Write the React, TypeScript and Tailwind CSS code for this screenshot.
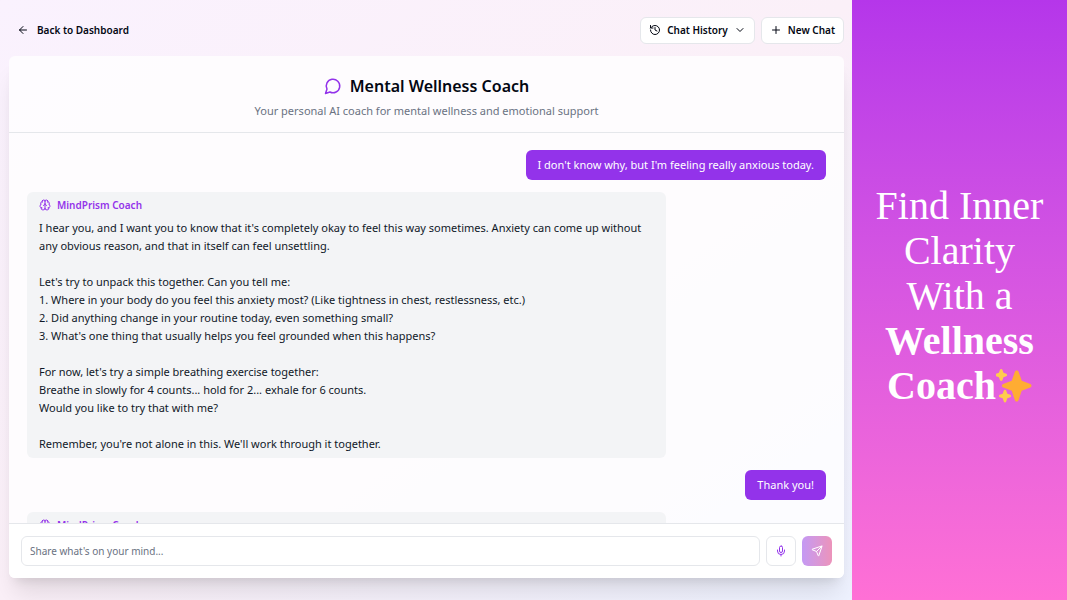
import React, { useState } from 'react';
import { ArrowLeft, Brain, ChevronDown, History, Mic, Plus } from 'lucide-react';

interface Message {
  id: number;
  role: 'user' | 'coach';
  text: string;
}

const initialMessages: Message[] = [
  { id: 1, role: 'user', text: "I don't know why, but I'm feeling really anxious today." },
  {
    id: 2,
    role: 'coach',
    text: `I hear you, and I want you to know that it's completely okay to feel this way sometimes. Anxiety can come up without any obvious reason, and that in itself can feel unsettling.

Let's try to unpack this together. Can you tell me:
1. Where in your body do you feel this anxiety most? (Like tightness in chest, restlessness, etc.)
2. Did anything change in your routine today, even something small?
3. What's one thing that usually helps you feel grounded when this happens?

For now, let's try a simple breathing exercise together:
Breathe in slowly for 4 counts... hold for 2... exhale for 6 counts.
Would you like to try that with me?

Remember, you're not alone in this. We'll work through it together.`,
  },
  { id: 3, role: 'user', text: 'Thank you!' },
  { id: 4, role: 'coach', text: '' },
];

const ChatBubbleIcon: React.FC = () => (
  <svg className="size-[18px] text-[#9333ea]" viewBox="0 0 24 24" fill="none" stroke="currentColor" strokeWidth="2" strokeLinecap="round" strokeLinejoin="round" aria-hidden="true">
    <path d="M7.9 20A9 9 0 1 0 4 16.1L2 22Z" />
  </svg>
);

const SendIcon: React.FC = () => (
  <svg className="size-3" viewBox="0 0 24 24" fill="none" stroke="currentColor" strokeWidth="2" strokeLinecap="round" strokeLinejoin="round" aria-hidden="true">
    <path d="M14.536 21.686a.5.5 0 0 0 .937-.024l6.500-19a.496.496 0 0 0-.635-.635l-19 6.500a.5.5 0 0 0-.024.937l7.930 3.180a2 2 0 0 1 1.112 1.110z" />
    <path d="m21.854 2.147-10.940 10.939" />
  </svg>
);

const Sparkles: React.FC = () => (
  <svg className="size-9 shrink-0" viewBox="0 0 36 36" aria-hidden="true">
    <path fill="#ffac33" d="M34.3 16.9 25.8 13.7 22.6 4.8C22.3 4 21.5 3.5 20.7 3.5S19.2 4 18.9 4.8L15.7 13.7 7.2 16.9C6.4 17.2 5.9 17.9 5.9 18.7S6.4 20.2 7.2 20.5L15.7 23.7 18.9 33.2C19.2 34 19.9 34.5 20.7 34.5S22.2 34 22.5 33.2L25.7 23.7 34.2 20.5C35 20.2 35.5 19.5 35.5 18.7S35.1 17.2 34.3 16.9Z" />
    <path fill="#ffcc4d" d="M14.3 27.8 11.3 26.7 10.2 23.6C10 23.1 9.5 22.8 9 22.8S8 23.1 7.8 23.6L6.7 26.7 3.7 27.8C3.2 28 2.9 28.5 2.9 29S3.2 30 3.7 30.2L6.7 31.3 7.8 34.6C8 35.1 8.5 35.5 9 35.5S10 35.1 10.2 34.6L11.3 31.3 14.3 30.2C14.8 30 15.1 29.5 15.1 29S14.8 28 14.3 27.8ZM10.3 6.8 7.5 5.7 6.4 2.8C6.2 2.3 5.7 2 5.2 2S4.2 2.3 4 2.8L2.9 5.7.1 6.8C-.4 7-.7 7.5-.7 8S-.4 9 .1 9.2L2.9 10.3 4 13.2C4.2 13.7 4.7 14 5.2 14S6.2 13.7 6.4 13.2L7.5 10.3 10.3 9.2C10.8 9 11.1 8.5 11.1 8S10.8 7 10.3 6.8Z" />
  </svg>
);

const MessageBubble: React.FC<{ message: Message }> = ({ message }) => {
  if (message.role === 'user') {
    return (
      <div className="self-end rounded-md bg-[#9333ea] px-3 py-1.5 text-[11px] leading-[18px] text-white">
        {message.text}
      </div>
    );
  }

  return (
    <div className="w-4/5 shrink-0 rounded-md bg-gray-100 px-3 py-[5px]">
      <div className="mb-1.5 flex items-center gap-1.5 text-[10px] leading-4 font-semibold text-[#9333ea]">
        <Brain size={12} />
        MindPrism Coach
      </div>
      <p className="min-h-[18px] text-[11px] leading-[18px] whitespace-pre-line text-gray-900">{message.text}</p>
    </div>
  );
};

export default function App() {
  const [messages, setMessages] = useState<Message[]>(initialMessages);
  const [input, setInput] = useState('');

  const handleSend = (e: React.FormEvent) => {
    e.preventDefault();
    if (!input.trim()) return;
    setMessages([...messages, { id: messages.length + 1, role: 'user', text: input }]);
    setInput('');
  };

  return (
    <div className="flex h-screen font-['Noto_Sans',sans-serif] text-gray-950">
      <main className="flex min-w-0 flex-1 flex-col bg-linear-to-br from-[#faf2fe] via-[#fbf0f8] to-[#eef2ff] pr-2 pb-[22px] pl-[9px]">
        <div className="flex h-14 items-center justify-between pt-1 text-[10px] font-semibold">
          <button className="flex h-7 items-center gap-2 rounded-md px-2">
            <ArrowLeft size={12} />
            Back to Dashboard
          </button>
          <div className="flex gap-1.5">
            <button className="flex h-[27px] items-center gap-1.5 rounded-md border border-gray-200 bg-white px-2">
              <History size={12} />
              Chat History
              <ChevronDown size={12} />
            </button>
            <button className="flex h-[27px] items-center gap-1.5 rounded-md border border-gray-200 bg-white px-2">
              <Plus size={12} />
              New Chat
            </button>
          </div>
        </div>

        <section className="flex min-h-0 flex-1 flex-col overflow-hidden rounded-md bg-white/80 shadow-xl">
          <header className="border-b border-gray-200 pt-[18px] pb-3 text-center">
            <h1 className="flex items-center justify-center gap-2 text-base leading-6 font-semibold">
              <ChatBubbleIcon />
              Mental Wellness Coach
            </h1>
            <p className="mt-1 text-[11px] leading-[18px] text-gray-500">
              Your personal AI coach for mental wellness and emotional support
            </p>
          </header>

          <div className="flex min-h-0 flex-1 flex-col gap-3 overflow-hidden px-[18px] pt-[17px]">
            {messages.map((message) => (
              <MessageBubble key={message.id} message={message} />
            ))}
          </div>

          <form onSubmit={handleSend} className="flex gap-1.5 border-t border-gray-200 bg-white p-3">
            <input
              aria-label="Message"
              value={input}
              onChange={(e) => setInput(e.target.value)}
              placeholder="Share what's on your mind..."
              className="h-[30px] min-w-0 flex-1 rounded-md border border-gray-200 bg-white px-2 text-[10px] placeholder:text-gray-500"
            />
            <button type="button" aria-label="Record" className="flex size-[30px] items-center justify-center rounded-md border border-gray-200 bg-white text-[#9333ea]">
              <Mic size={12} />
            </button>
            <button type="submit" aria-label="Send" className="flex size-[30px] items-center justify-center rounded-md bg-linear-to-r from-[#c499f4] to-[#ec93ba] text-white">
              <SendIcon />
            </button>
          </form>
        </section>
      </main>

      <aside className="flex w-[215px] shrink-0 items-center justify-center bg-linear-to-b from-[#b536ea] to-[#ff70d5] pb-2.5 text-center font-['Liberation_Serif',serif] text-[40px] leading-[45px] text-white">
        <h2>
          Find Inner
          <br />
          Clarity
          <br />
          With a
          <br />
          <strong>Wellness</strong>
          <span className="flex items-center justify-center">
            <strong>Coach</strong>
            <Sparkles />
          </span>
        </h2>
      </aside>
    </div>
  );
}
